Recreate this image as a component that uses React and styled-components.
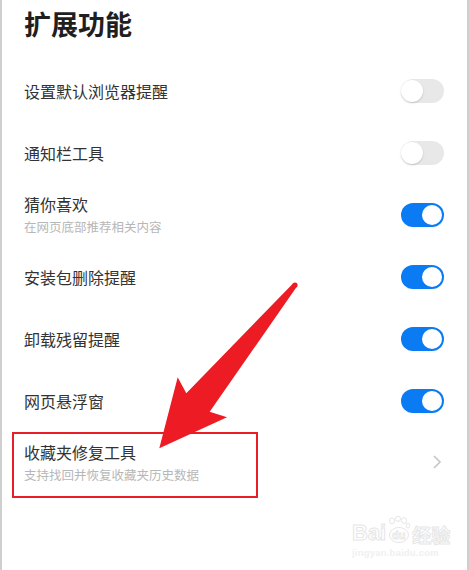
import React from 'react';
import styled, { createGlobalStyle } from 'styled-components';

const GlobalStyle = createGlobalStyle`
  html, body {
    margin: 0;
    padding: 0;
    background: #ffffff;
  }
  body {
    font-family: "Noto Sans CJK SC", "Noto Sans", sans-serif;
  }
`;

const Page = styled.div`
  position: relative;
  width: 469px;
  height: 570px;
  box-sizing: border-box;
  border-left: 2px solid #cfcfcf;
  border-right: 2px solid #cfcfcf;
  background: #ffffff;
  overflow: hidden;
`;

const Title = styled.h1`
  margin: 0;
  height: 60px;
  box-sizing: border-box;
  padding: 9px 0 0 22px;
  font-size: 27px;
  line-height: 30px;
  font-weight: 700;
  color: #1f1f1f;
`;

const Row = styled.div`
  height: 62px;
  box-sizing: border-box;
  padding: 0 23px 0 22px;
  display: flex;
  align-items: center;
  justify-content: space-between;
`;

const Texts = styled.div`
  display: flex;
  flex-direction: column;
  gap: ${(p) => (p.$sub ? '5px' : '0')};
  margin-top: ${(p) => (p.$sub ? '-2px' : '0')};
`;

const Label = styled.div`
  font-size: 16px;
  line-height: 20px;
  color: #333333;
`;

const SubLabel = styled.div`
  font-size: 12.5px;
  line-height: 16px;
  color: #b7b7b7;
`;

const Track = styled.div`
  position: relative;
  width: 43px;
  height: 24px;
  border-radius: 12px;
  background: ${(p) => (p.$on ? '#0b7bf4' : '#e8e8e8')};
  flex-shrink: 0;
`;

const Knob = styled.div`
  position: absolute;
  top: ${(p) => (p.$on ? '2px' : '1px')};
  left: ${(p) => (p.$on ? '21px' : '0')};
  width: ${(p) => (p.$on ? '20px' : '22px')};
  height: ${(p) => (p.$on ? '20px' : '22px')};
  border-radius: 50%;
  background: #ffffff;
  box-shadow: ${(p) => (p.$on ? 'none' : '0 1px 2px rgba(0,0,0,0.18)')};
`;

const Chevron = styled.svg`
  width: 10px;
  height: 16px;
  margin-right: 2px;
  margin-top: -3px;
`;

const Annotation = styled.svg`
  position: absolute;
  left: 0;
  top: 0;
  width: 469px;
  height: 570px;
  pointer-events: none;
`;

const Watermark = styled.div`
  position: absolute;
  left: 350px;
  top: 516px;
  display: flex;
  flex-direction: column;
  align-items: flex-start;
  font-family: "Liberation Sans", sans-serif;
`;

const MarkTop = styled.div`
  display: flex;
  align-items: flex-end;
  gap: 2px;
`;

const MarkWord = styled.span`
  font-size: ${(p) => p.$size || '22px'};
  font-weight: 700;
  line-height: 1;
  color: #ffffff;
  -webkit-text-stroke: 1px #e6e6e6;
  font-family: ${(p) => (p.$cjk ? '"Noto Sans CJK SC", sans-serif' : '"Liberation Sans", sans-serif')};
`;

const MarkUrl = styled.span`
  margin-top: 3px;
  font-size: 9.5px;
  font-weight: 700;
  color: #f0f0f0;
  letter-spacing: 0.2px;
`;

const Toggle = ({ on }) => (
  <Track $on={on}>
    <Knob $on={on} />
  </Track>
);

const rows = [
  { label: '设置默认浏览器提醒', on: false },
  { label: '通知栏工具', on: false },
  { label: '猜你喜欢', sub: '在网页底部推荐相关内容', on: true },
  { label: '安装包删除提醒', on: true },
  { label: '卸载残留提醒', on: true },
  { label: '网页悬浮窗', on: true },
];

export default function App() {
  return (
    <Page>
      <GlobalStyle />
      <Title>扩展功能</Title>
      {rows.map((r) => (
        <Row key={r.label}>
          <Texts $sub={!!r.sub}>
            <Label>{r.label}</Label>
            {r.sub && <SubLabel>{r.sub}</SubLabel>}
          </Texts>
          <Toggle on={r.on} />
        </Row>
      ))}
      <Row>
        <Texts $sub>
          <Label>收藏夹修复工具</Label>
          <SubLabel>支持找回并恢复收藏夹历史数据</SubLabel>
        </Texts>
        <Chevron viewBox="0 0 10 16">
          <path d="M2 2 L8 8 L2 14" fill="none" stroke="#c6c6c6" strokeWidth="1.6" />
        </Chevron>
      </Row>

      <Watermark>
        <MarkTop>
          <MarkWord>Bai</MarkWord>
          <svg width="22" height="28" viewBox="0 0 22 28">
            <g fill="none" stroke="#e6e6e6" strokeWidth="1">
              <ellipse cx="4" cy="5" rx="2.5" ry="3" />
              <ellipse cx="10" cy="2.8" rx="2.5" ry="2.5" />
              <ellipse cx="16" cy="4.5" rx="2.5" ry="3" />
              <ellipse cx="20" cy="9.5" rx="1.8" ry="2.5" />
              <ellipse cx="11" cy="19" rx="9.5" ry="7.5" />
            </g>
            <text x="4" y="23" fontSize="11" fontWeight="700" fill="#ffffff" stroke="#e6e6e6" strokeWidth="0.8" fontFamily="Liberation Sans, sans-serif">du</text>
          </svg>
          <MarkWord $cjk $size="19px">经验</MarkWord>
        </MarkTop>
        <MarkUrl>jingyan.baidu.com</MarkUrl>
      </Watermark>

      <Annotation viewBox="0 0 469 570">
        <rect x="11" y="433" width="244" height="64" fill="none" stroke="#e81e26" strokeWidth="2" />
        <polygon
          points="291,283.4 184.3,393.3 175.7,377.3 157.3,448.3 225,417.3 207.7,411.7 294.9,286.6"
          fill="#ed1c24"
        />
        <circle cx="293" cy="285" r="2.6" fill="#ed1c24" />
      </Annotation>
    </Page>
  );
}
